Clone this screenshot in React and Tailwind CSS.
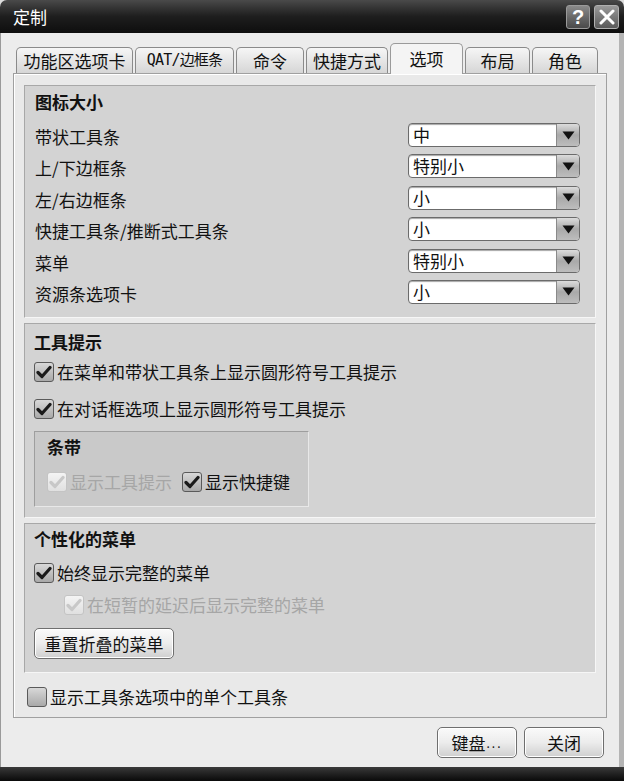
import React from "react";

const F = { fontFamily: '"Noto Sans CJK SC", "Noto Sans", sans-serif' };

function Check({ checked = true, disabled = false }) {
  return (
    <div
      className={
        "w-[20px] h-[20px] rounded-[3px] border flex items-center justify-center shrink-0 " +
        (disabled
          ? "border-[#c4c4c4] bg-gradient-to-b from-[#f4f4f4] to-[#e0e0e0]"
          : "border-[#5a5a5a] bg-gradient-to-b from-[#d8d8d8] to-[#a9a9a9]")
      }
    >
      {checked && (
        <svg width="16" height="14" viewBox="0 0 16 14">
          <path
            d="M2 7.5 L6 11.5 L14 2.5"
            fill="none"
            stroke={disabled ? "#c8c8c8" : "#1a1a1a"}
            strokeWidth="3.2"
            strokeLinecap="round"
            strokeLinejoin="round"
          />
        </svg>
      )}
    </div>
  );
}

function CheckRow({ label, checked = true, disabled = false, className = "" }) {
  return (
    <div className={"flex items-center gap-[3px] h-[22px] " + className}>
      <Check checked={checked} disabled={disabled} />
      <span className={"text-[17px] leading-[22px] " + (disabled ? "text-[#a6a6a6]" : "text-[#111]")}>
        {label}
      </span>
    </div>
  );
}

function Select({ value }) {
  return (
    <div className="w-[172px] h-[24px] rounded-[4px] border border-[#6b6b6b] bg-white flex items-stretch overflow-hidden shadow-[inset_0_1px_1px_rgba(0,0,0,0.35)]">
      <div className="flex-1 pl-[4px] text-[17px] leading-[22px] text-[#111]">{value}</div>
      <div className="w-[23px] bg-gradient-to-b from-[#dcdcdc] via-[#a9a9a9] to-[#bdbdbd] border-l border-[#8a8a8a] flex items-center justify-center">
        <svg width="13" height="9" viewBox="0 0 13 9">
          <path d="M0.5 0.5 H12.5 L6.5 8.5 Z" fill="#111" />
        </svg>
      </div>
    </div>
  );
}

function Group({ children, className = "" }) {
  return (
    <div
      className={
        "bg-[#d3d3d3] border-t border-l border-[#a8a8a8] border-b-[#f6f6f6] border-r-[#f6f6f6] border-b border-r " +
        className
      }
    >
      {children}
    </div>
  );
}

function Button({ children, className = "" }) {
  return (
    <div
      className={
        "h-[31px] rounded-[5px] border border-[#6f6f6f] bg-gradient-to-b from-[#fafafa] via-[#ececec] to-[#cfcfcf] flex items-center justify-center text-[17px] text-[#111] shadow-[inset_0_0_0_1px_#ffffff] " +
        className
      }
    >
      {children}
    </div>
  );
}

const tabs = [
  { t: "功能区选项卡", w: 117 },
  { t: "QAT/边框条", w: 99, mono: true },
  { t: "命令", w: 68 },
  { t: "快捷方式", w: 82 },
  { t: "选项", w: 73, sel: true },
  { t: "布局", w: 65 },
  { t: "角色", w: 66 },
];

export default function App() {
  const sizes = [
    ["带状工具条", "中"],
    ["上/下边框条", "特别小"],
    ["左/右边框条", "小"],
    ["快捷工具条/推断式工具条", "小"],
    ["菜单", "特别小"],
    ["资源条选项卡", "小"],
  ];
  return (
    <div style={F} className="w-[624px] h-[781px] bg-[#dcdcdc] flex flex-col overflow-hidden">
      {/* title bar */}
      <div className="h-[33px] shrink-0 rounded-t-[7px] bg-gradient-to-b from-[#4a4a4a] via-[#1e1e1e] to-[#0e0e0e] flex items-center pl-[13px] pr-[5px]">
        <span className="text-white text-[17px] leading-none">定制</span>
        <div className="flex-1" />
        <div className="w-[24px] h-[24px] rounded-[3px] border border-[#9a9a9a] bg-gradient-to-b from-[#8a8a8a] to-[#4a4a4a] flex items-center justify-center text-white text-[20px] font-bold leading-none mr-[4px]" style={{ fontFamily: '"Liberation Sans", sans-serif' }}>
          ?
        </div>
        <div className="w-[25px] h-[24px] rounded-[3px] border border-[#b0b0b0] bg-gradient-to-b from-[#9a9a9a] to-[#5a5a5a] flex items-center justify-center">
          <svg width="16" height="16" viewBox="0 0 16 16">
            <path d="M2 2 L14 14 M14 2 L2 14" stroke="#fff" strokeWidth="3" strokeLinecap="round" />
          </svg>
        </div>
      </div>

      {/* body */}
      <div className="flex-1 flex flex-col bg-[#ececec] border-l border-[#9a9a9a] border-r-[5px] border-r-[#b4b4b4]">
        {/* tabs */}
        <div className="flex items-end gap-[2px] pl-[15px] pt-[10px] h-[40px] shrink-0">
          {tabs.map((tb) => (
            <div
              key={tb.t}
              style={{ width: tb.w, ...(tb.mono ? { fontFamily: '"DejaVu Sans Mono", "Noto Sans CJK SC", monospace' } : {}) }}
              className={
                "flex items-center justify-center text-[17px] text-[#111] border border-b-0 rounded-t-[5px] " +
                (tb.sel
                  ? "h-[31px] bg-[#f4f4f4] border-[#9a9a9a] relative top-[1px] z-10"
                  : "h-[26px] bg-gradient-to-b from-[#f6f6f6] to-[#d6d6d6] border-[#8a8a8a]")
              }
            >
              <span className={tb.mono ? "text-[15px] tracking-[-0.8px]" : ""}>{tb.t}</span>
            </div>
          ))}
        </div>

        {/* panel */}
        <div className="ml-[12px] mr-[12px] h-[645px] bg-[#e9e9e9] border border-[#a0a0a0] shadow-[inset_1px_1px_0_#ffffff] px-[10px] pt-[11px] flex flex-col">
          <Group className="h-[233px] pl-[10px] pr-[15px] pt-[5px]">
            <div className="text-[17px] leading-[22px] font-bold text-[#111]">图标大小</div>
            <div className="mt-[10px] flex flex-col gap-[7.4px]">
              {sizes.map(([l, v]) => (
                <div key={l} className="flex items-center justify-between h-[24px]">
                  <span className="text-[17px] leading-[22px] text-[#111] relative top-[2px]">{l}</span>
                  <Select value={v} />
                </div>
              ))}
            </div>
          </Group>

          <div className="h-[5px] shrink-0" />
          <Group className="h-[195px] pl-[9px] pt-[7px]">
            <div className="text-[17px] leading-[22px] font-bold text-[#111]">工具提示</div>
            <CheckRow className="mt-[8px]" label="在菜单和带状工具条上显示圆形符号工具提示" />
            <CheckRow className="mt-[15px]" label="在对话框选项上显示圆形符号工具提示" />
            <div className="mt-[11px] w-[275px] h-[76px] bg-[#c9c9c9] border border-[#9e9e9e] border-r-[#e8e8e8] border-b-[#e8e8e8] pl-[12px] pt-[4px]">
              <div className="text-[17px] leading-[22px] font-bold text-[#111]">条带</div>
              <div className="flex items-center mt-[13px] gap-[10px]">
                <CheckRow label="显示工具提示" disabled />
                <CheckRow label="显示快捷键" />
              </div>
            </div>
          </Group>

          <div className="h-[5px] shrink-0" />
          <Group className="h-[150px] pl-[9px] pt-[4px]">
            <div className="text-[17px] leading-[22px] font-bold text-[#111]">个性化的菜单</div>
            <CheckRow className="mt-[12px]" label="始终显示完整的菜单" />
            <CheckRow className="mt-[10px] ml-[30px]" label="在短暂的延迟后显示完整的菜单" disabled />
            <Button className="mt-[12px] w-[140px]">重置折叠的菜单</Button>
          </Group>

          <CheckRow className="mt-[13px] ml-[3px]" label="显示工具条选项中的单个工具条" checked={false} />
        </div>

        {/* bottom buttons */}
        <div className="flex justify-end gap-[7px] pr-[15px] pt-[9px]">
          <Button className="w-[80px]">
            键盘<span className="text-[12px] tracking-[2px] ml-[1px]">...</span>
          </Button>
          <Button className="w-[80px]">关闭</Button>
        </div>
        <div className="flex-1" />
      </div>
      <div className="h-[14px] shrink-0 bg-gradient-to-b from-[#3a3a3a] to-[#0a0a0a]" />
    </div>
  );
}
